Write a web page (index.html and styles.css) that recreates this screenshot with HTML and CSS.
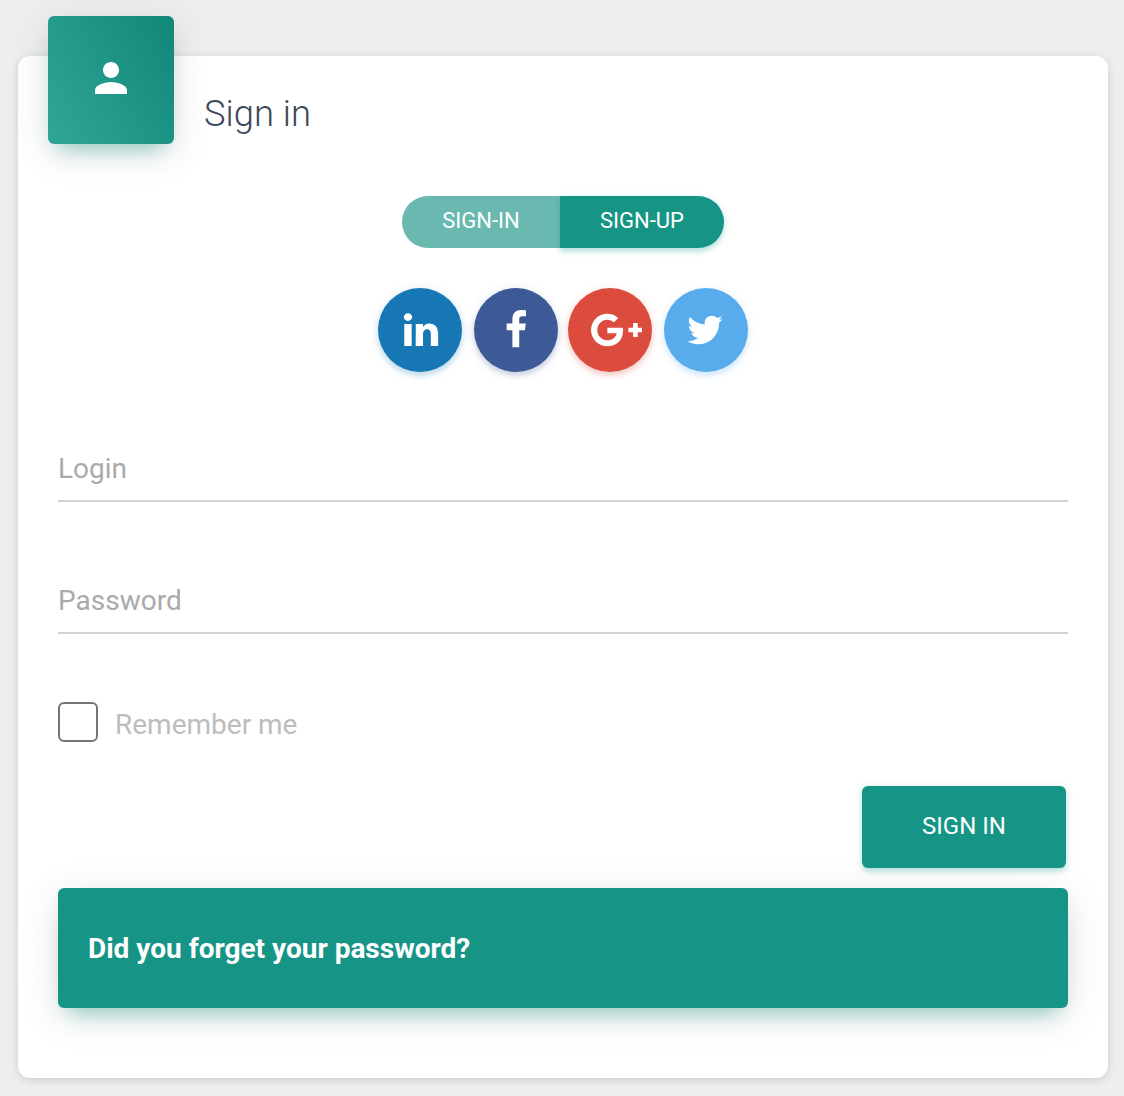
FILE: index.html
```html
<!DOCTYPE html>
<html lang="en">
<head>
<meta charset="utf-8">
<title>Sign in</title>
<link rel="stylesheet" href="styles.css">
</head>
<body>
<main class="card">
  <header class="card-header">
    <div class="card-icon">
      <svg class="person" viewBox="0 0 24 24"><path d="M12 12c2.210 0 4-1.790 4-4s-1.790-4-4-4-4 1.790-4 4 1.790 4 4 4zm0 2c-2.670 0-8 1.340-8 4v2h16v-2c0-2.660-5.330-4-8-4z"/></svg>
    </div>
    <h1 class="card-title">Sign in</h1>
  </header>
  <nav class="mode">
    <button class="mode-button mode-muted" type="button">SIGN-IN</button>
    <button class="mode-button mode-active" type="button">SIGN-UP</button>
  </nav>
  <div class="social">
    <a class="round linkedin"><svg class="brand" viewBox="0 0 1792 1792"><path d="M477 625v991h-330v-991h330zm21-306q1 73-50.500 122t-135.500 49h-2q-82 0-132-49t-50-122q0-74 51.500-122.500t134.500-48.500 133 48.500 51 122.500zm1166 729v568h-329v-530q0-105-40.500-164.500t-126.500-59.500q-63 0-105.500 34.500t-63.500 85.500q-11 30-11 81v553h-329q2-399 2-647t-1-296l-1-48h329v144h-2q20-32 41-56t56.500-52 87-43.500 114.500-15.500q171 0 275 113.500t104 332.500z"/></svg></a>
    <a class="round facebook"><svg class="brand" viewBox="0 0 1792 1792"><path d="M1343 12v264h-157q-86 0-116 36t-30 108v189h293l-39 296h-254v759h-306v-759h-255v-296h255v-218q0-186 104-288.500t277-102.500q147 0 228 12z"/></svg></a>
    <a class="round google"><svg class="brand brand-wide" viewBox="0 0 2304 1792"><path d="M1437 913q0 208-87 370.500t-248 254-369 91.500q-149 0-285-58t-234-156-156-234-58-285 58-285 156-234 234-156 285-58q286 0 491 192l-199 191q-117-113-292-113-123 0-227.500 62t-165.500 168.500-61 232.500 61 232.500 165.500 168.500 227.500 62q83 0 152.500-23t114.500-57.500 78.500-78.500 49-83 21.500-74h-416v-252h692q12 63 12 122zm867-122v210h-209v209h-210v-209h-209v-210h209v-209h210v209h209z"/></svg></a>
    <a class="round twitter"><svg class="brand" viewBox="0 0 1792 1792"><path d="M1684 408q-67 98-162 167 1 14 1 42 0 130-38 259.500t-115.500 248.500-184.500 210.500-258 146-323 54.500q-271 0-496-145 35 4 78 4 225 0 401-138-105-2-188-64.500t-114-159.500q33 5 61 5 43 0 85-11-112-23-185.500-111.500t-73.500-205.500v-4q68 38 146 41-66-44-105-115t-39-154q0-88 44-163 121 149 294.500 238.500t371.500 99.500q-8-38-8-74 0-134 94.500-228.500t228.500-94.500q140 0 236 102 109-21 205-78-37 115-142 178 93-10 186-50z"/></svg></a>
  </div>
  <form class="form">
    <input class="field" type="text" placeholder="Login">
    <input class="field field-password" type="password" placeholder="Password">
    <label class="remember"><input class="check" type="checkbox"><span>Remember me</span></label>
    <button class="submit" type="button">SIGN IN</button>
  </form>
  <a class="forgot">Did you forget your password?</a>
</main>
</body>
</html>
```
FILE: styles.css
```css
* { box-sizing: border-box; }

body {
  margin: 0;
  padding: 56px 16px 18px 18px;
  background: #eee;
  font-family: Roboto, sans-serif;
}

.card {
  height: 1022px;
  padding: 0 40px;
  border-radius: 12px;
  background: #fff;
  box-shadow: 0 2px 8px rgba(0, 0, 0, .14);
}

.card-header {
  display: flex;
  height: 140px;
  margin-left: -10px;
}

.card-icon {
  width: 126px;
  height: 128px;
  margin-top: -40px;
  padding: 38px 39px;
  border-radius: 6px;
  background: linear-gradient(60deg, #2fa698, #128778);
  box-shadow: 0 8px 40px rgba(0, 0, 0, .11), 0 14px 20px -10px rgba(0, 150, 136, .4);
}

.person {
  display: block;
  width: 48px;
  height: 48px;
  fill: #fff;
}

.card-title {
  margin: 31px 0 0 30px;
  color: #3c4858;
  font-size: 36.4px;
  font-weight: 300;
  line-height: 54px;
}

.mode {
  display: flex;
  justify-content: center;
}

.mode-button {
  height: 52px;
  padding: 0 0 4px;
  border: 0;
  color: #fff;
  font: 400 22px Roboto, sans-serif;
}

.mode-muted {
  width: 158px;
  border-radius: 26px 0 0 26px;
  background: #69b9b1;
}

.mode-active {
  width: 164px;
  border-radius: 0 26px 26px 0;
  background: #169587;
  box-shadow: 0 4px 4px rgba(0, 150, 136, .14), 0 2px 8px rgba(0, 150, 136, .2);
}

.social {
  display: flex;
  justify-content: center;
  gap: 10px;
  margin-top: 40px;
}

.round {
  display: flex;
  align-items: center;
  width: 84px;
  height: 84px;
  padding-left: 22px;
  border-radius: 50%;
}

.linkedin {
  margin-right: 2px;
  padding-left: 23px;
  background: #1777b4;
  box-shadow: 0 4px 4px rgba(23, 119, 180, .14), 0 2px 10px rgba(23, 119, 180, .2);
}

.facebook {
  padding: 0 0 1px 21.5px;
  background: #3e5a96;
  box-shadow: 0 4px 4px rgba(62, 90, 150, .14), 0 2px 10px rgba(62, 90, 150, .2);
}

.google {
  margin-right: 2px;
  padding-left: 22.5px;
  background: #dc4c3e;
  box-shadow: 0 4px 4px rgba(220, 76, 62, .14), 0 2px 10px rgba(220, 76, 62, .2);
}

.twitter {
  padding-left: 21px;
  background: #59aceb;
  box-shadow: 0 4px 4px rgba(89, 172, 235, .14), 0 2px 10px rgba(89, 172, 235, .2);
}

.brand {
  flex: none;
  width: 40px;
  height: 40px;
  fill: #fff;
}

.brand-wide { width: 51.43px; }

.form {
  display: flex;
  flex-direction: column;
  margin-top: 58px;
}

.field {
  height: 72px;
  padding: 6px 0 0;
  border: 0;
  border-bottom: 2px solid #d2d2d2;
  background: none;
  font: 400 28px Roboto, sans-serif;
}

.field::placeholder { color: #aaa; }

.field-password { margin-top: 60px; }

.remember {
  display: flex;
  gap: 17px;
  height: 40px;
  margin-top: 68px;
  color: #bdbdbd;
  font-size: 28px;
  line-height: 46px;
}

.check {
  appearance: none;
  width: 40px;
  height: 40px;
  margin: 0;
  border: 2px solid #757575;
  border-radius: 6px;
}

.submit {
  align-self: flex-end;
  width: 204px;
  height: 82px;
  margin: 44px 2px 0 0;
  padding: 0 0 2px;
  border: 0;
  border-radius: 6px;
  background: #169587;
  box-shadow: 0 4px 4px rgba(0, 150, 136, .14), 0 2px 8px rgba(0, 150, 136, .2);
  color: #fff;
  font: 400 24px Roboto, sans-serif;
}

.forgot {
  display: flex;
  align-items: center;
  height: 120px;
  margin-top: 20px;
  padding: 0 30px;
  border-radius: 6px;
  background: #169587;
  box-shadow: 0 8px 40px rgba(0, 0, 0, .11), 0 14px 20px -10px rgba(0, 150, 136, .4);
  color: #fff;
  font-size: 28px;
  font-weight: 700;
}
```
